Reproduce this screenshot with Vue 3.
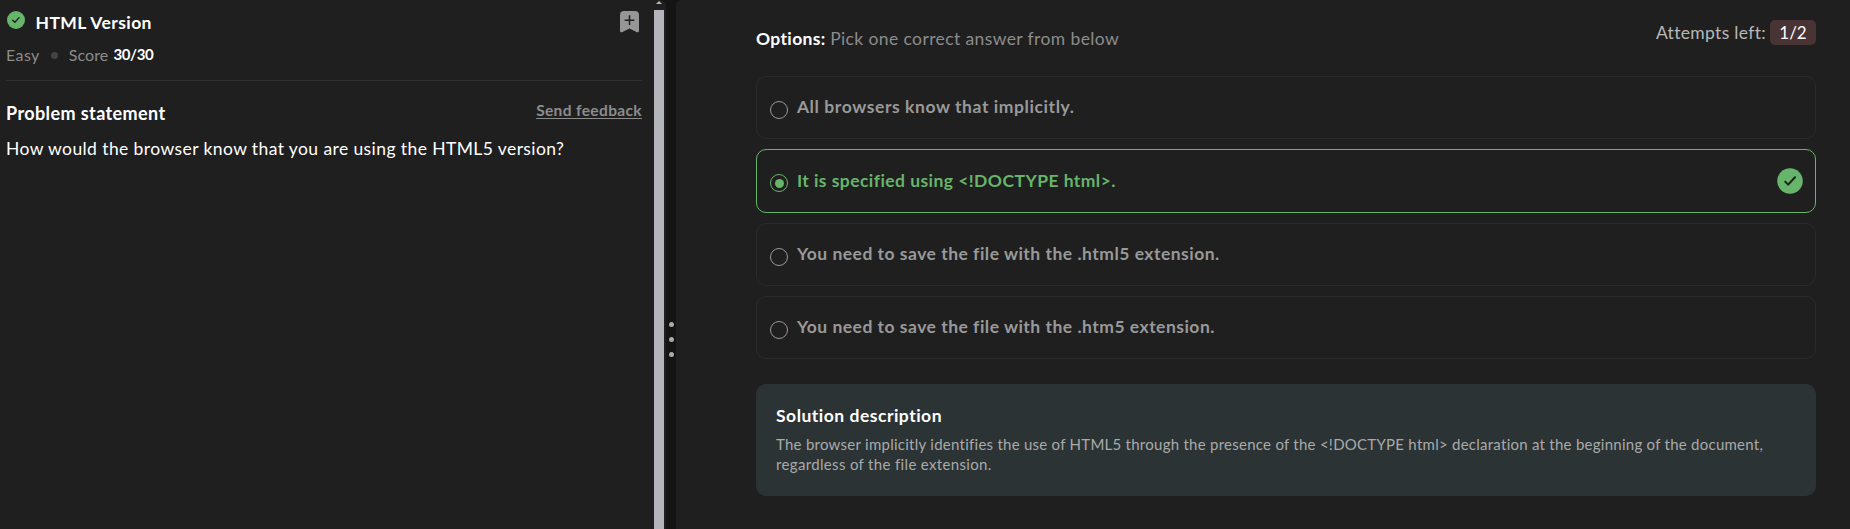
<script setup>
const options = [
  { text: 'All browsers know that implicitly.', spacing: 0.58 },
  { text: 'It is specified using <!DOCTYPE html>.', spacing: 0.44, correct: true },
  { text: 'You need to save the file with the .html5 extension.', spacing: 0.49 },
  { text: 'You need to save the file with the .htm5 extension.', spacing: 0.49 },
]
</script>

<template>
  <main class="page">
    <section class="problem">
      <header class="head">
        <svg class="check" viewBox="0 0 26 26">
          <circle cx="13" cy="13" r="13" fill="#66b56b" />
          <path d="M8.2 13.2l3.2 3 6-6.6" fill="none" stroke="#1f1f1f" stroke-width="2" stroke-linecap="round" stroke-linejoin="round" />
        </svg>
        <h1>HTML Version</h1>
        <svg class="bookmark" viewBox="0 0 19 22">
          <path d="M0 4Q0 0 4 0H15Q19 0 19 4V20Q18.6 21.8 17 21.2L9.5 17.5L2 21.2Q.4 21.8 0 20Z" fill="#969696" />
          <path d="M9.5 4.3V14M4.7 9.2H14.3" stroke="#1f1f1f" stroke-width="1.5" />
        </svg>
      </header>
      <div class="meta">
        <span class="easy">Easy</span><i class="bullet"></i><span class="score">Score</span><b>30/30</b>
      </div>
      <div class="statement">
        <h2>Problem statement</h2>
        <a class="feedback">Send feedback</a>
      </div>
      <p class="question">How would the browser know that you are using the HTML5 version?</p>
    </section>

    <div class="scrollbar">
      <svg viewBox="0 0 10 10"><path d="M5 1L8 4H2Z" fill="#b4b4bb" /></svg>
      <div class="thumb"></div>
    </div>

    <div class="splitter"><i></i><i></i><i></i></div>

    <section class="answers">
      <div class="top">
        <p class="hint"><b>Options:</b><span>Pick one correct answer from below</span></p>
        <p class="attempts"><span>Attempts left:</span><em>1/2</em></p>
      </div>
      <ul class="list">
        <li v-for="o in options" :key="o.text" :class="{ correct: o.correct }">
          <i class="radio"></i>
          <span class="label" :style="{ letterSpacing: o.spacing + 'px' }">{{ o.text }}</span>
          <svg v-if="o.correct" class="mark" viewBox="0 0 26 26">
            <circle cx="13" cy="13" r="12.8" fill="#66b56b" />
            <path d="M8.2 13.6l3 3 6.8-7.4" fill="none" stroke="#1f1f1f" stroke-width="2" stroke-linecap="round" stroke-linejoin="round" />
          </svg>
        </li>
      </ul>
      <article class="solution">
        <h3>Solution description</h3>
        <p>The browser implicitly identifies the use of HTML5 through the presence of the &lt;!DOCTYPE html&gt; declaration at the beginning of the document, <span>regardless of the file extension.</span></p>
      </article>
    </section>
  </main>
</template>

<style>
body { background: #141414; }
</style>

<style scoped>
* { box-sizing: border-box; margin: 0; padding: 0; }
.page {
  display: flex;
  height: 529px;
  overflow: hidden;
  background: #141414;
  color: #fff;
  font-family: Lato, "Open Sans", sans-serif;
  font-variant-ligatures: none;
}
svg { display: block; flex: none; }
.problem { width: 654px; padding: 0 12px 0 6px; background: #1f1f1f; }
.head { display: flex; padding-top: 11px; height: 43px; }
.check { width: 18px; height: 18px; margin: 0.2px 0 0 1px; }
h1 { flex: 1; margin: 1px 0 0 10.5px; font-size: 17.5px; line-height: 22px; letter-spacing: 0.42px; }
.bookmark { width: 19px; height: 22px; margin-right: 3px; }
.meta { display: flex; align-items: center; height: 38px; padding-bottom: 14px; border-bottom: 1px solid #2f2f2f; color: #8c8c8c; line-height: 23px; }
.easy { font-size: 16px; letter-spacing: 0.4px; }
.bullet { width: 7px; height: 7px; margin: 1px 11px 0 11px; border-radius: 50%; background: #444; }
.score { font-size: 16px; letter-spacing: 0.1px; }
.meta b { margin-left: 5px; font-size: 15px; letter-spacing: -0.35px; color: #fff; }
.statement { display: flex; justify-content: space-between; margin-top: 18px; }
h2 { margin-top: 2px; font-size: 18px; line-height: 24px; letter-spacing: 0.4px; }
.feedback { margin-top: -1px; font-size: 15.5px; line-height: 24px; font-weight: 700; letter-spacing: 0.36px; color: #8c8c8c; text-decoration: underline; text-decoration-thickness: 1px; text-underline-offset: 2px; }
.question { margin-top: 11px; font-size: 17.5px; line-height: 26px; letter-spacing: 0.41px; white-space: nowrap; }
.scrollbar { display: flex; flex-direction: column; width: 12px; padding-right: 2px; background: #1f1f1f; border-top-right-radius: 6px; }
.scrollbar svg { width: 10px; height: 10px; }
.thumb { flex: 1; background: #b4b4bb; }
.splitter { width: 10px; padding: 321.5px 0 0 3px; }
.splitter i { display: block; width: 5px; height: 5px; margin-bottom: 10px; border-radius: 50%; background: #aaa; }
.answers { flex: 1; padding: 0 34px 0 80px; background: #1f1f1f; border-top-left-radius: 6px; }
.top { display: flex; justify-content: space-between; height: 76px; padding-top: 20px; white-space: nowrap; font-size: 17.5px; }
.hint { padding-top: 6px; line-height: 25px; }
.hint b { letter-spacing: 0.35px; }
.hint span { margin-left: 4.5px; color: #8c8c8c; letter-spacing: 0.39px; }
.attempts { display: flex; line-height: 25px; color: #b8b8b8; letter-spacing: 0.32px; }
.attempts em { width: 46px; height: 25px; margin-left: 4px; border-radius: 5px; background: #483335; color: #fff; font-style: normal; font-size: 17px; letter-spacing: 0; text-align: center; }
.list { display: flex; flex-direction: column; gap: 10px; list-style: none; }
.list li { display: flex; align-items: center; height: 63.25px; padding: 0 12px 0 14px; border: 1px solid #2b2b2b; border-radius: 10px; color: #999; font-size: 17.5px; font-weight: 700; line-height: 24px; }
.list .correct { border-color: #66b56b; color: #66b56b; }
.label { margin: -0.2px 0 0.2px; }
.radio { display: flex; width: 18px; height: 18px; margin: 5px 8.5px 0 -0.6px; border: 1.5px solid currentColor; border-radius: 50%; }
.correct .radio::after { content: ""; width: 9px; height: 9px; margin: auto; border-radius: 50%; background: currentColor; }
.mark { width: 26px; height: 26px; margin-left: auto; }
.solution { height: 112px; margin-top: 24.7px; padding: 20px 20px 0; border-radius: 10px; background: #2b3335; }
h3 { font-size: 17.5px; line-height: 24px; letter-spacing: 0.5px; }
.solution p { margin-top: 6px; font-size: 15px; line-height: 20.3px; letter-spacing: 0.26px; color: #aaa; }
.solution span { display: block; letter-spacing: 0.34px; }
</style>
